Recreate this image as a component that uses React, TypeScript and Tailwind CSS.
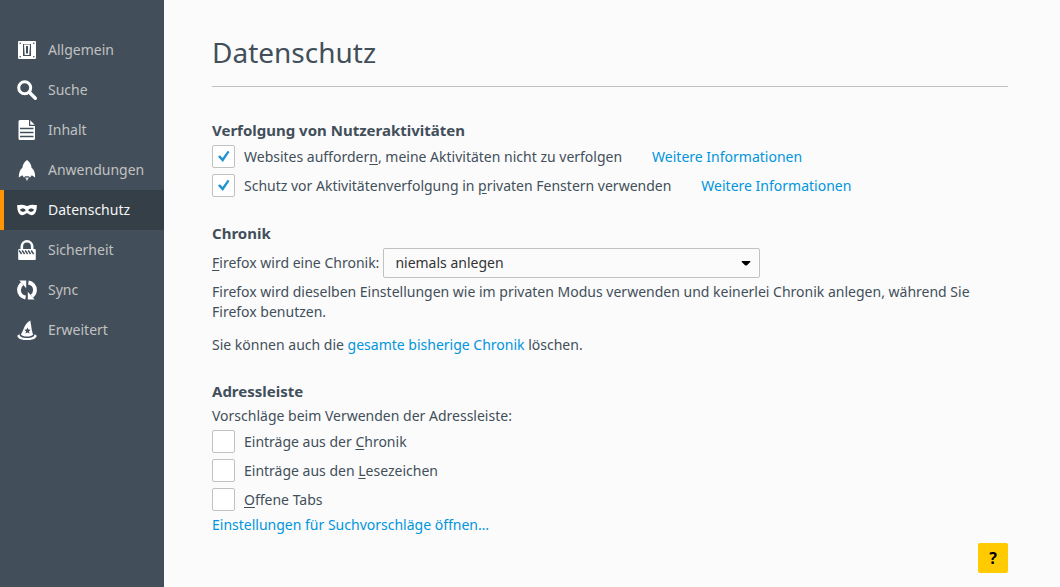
import { ReactNode } from "react";

const icons = {
  general: (
    <>
      <path
        fillRule="evenodd"
        d="M2 1h16a1 1 0 0 1 1 1v16a1 1 0 0 1-1 1H2a1 1 0 0 1-1-1V2a1 1 0 0 1 1-1ZM3.200 2.400a.8.8 0 1 0 0 1.600.8.8 0 0 0 0-1.600Zm13.600 0a.8.8 0 1 0 0 1.600.8.8 0 0 0 0-1.600ZM3.200 16a.8.8 0 1 0 0 1.600.8.8 0 0 0 0-1.600Zm13.600 0a.8.8 0 1 0 0 1.600.8.8 0 0 0 0-1.600ZM6 4v12h8V4Z"
      />
      <path fillRule="evenodd" d="M7 4.500h6l-.7 10.500H7.700ZM9 6v7.500h2V6Z" />
    </>
  ),
  search: (
    <>
      <circle cx="7.7" cy="7.7" r="6" fill="none" stroke="currentColor" strokeWidth="3" />
      <path d="m12.3 12.3 6 6" stroke="currentColor" strokeWidth="3.4" strokeLinecap="round" />
    </>
  ),
  content: (
    <>
      <path d="M3 0h9v6h6v12.500a1.500 1.500 0 0 1-1.500 1.500H3a1.500 1.500 0 0 1-1.500-1.500v-17A1.500 1.500 0 0 1 3 0Z" />
      <path d="M13.200.3 17.700 4.800h-4.500Z" />
      <path d="M3 8.500h13.500M3 12.500h13.500M3 16.500h13.500" className="stroke-[#424f5a]" strokeWidth="1.400" />
    </>
  ),
  applications: (
    <>
      <path d="M10 0c2.600 1.800 4.200 4.300 4.600 7.800 2.300 1.700 3.600 4.800 3.600 9.700l-3.400-2.200-1.800 2.200-1.200-1.300H8.200L7 17.500l-1.800-2.200-3.400 2.200c0-4.900 1.300-8 3.600-9.700C5.800 4.300 7.400 1.800 10 0Z" />
      <path d="M8.100 17.600h3.800L10 21Z" opacity="0.8" />
    </>
  ),
  privacy: (
    <path
      fillRule="evenodd"
      d="M.2 5C2 5.200 3 4.800 5 4.800c2.200 0 3.500 1.200 5 1.200s2.800-1.200 5-1.200c2 0 3 .4 4.800.2.100 5.800-1.500 10.200-5.300 10.200-2.300 0-3-1.900-4.500-1.900s-2.200 1.900-4.500 1.900C1.700 15.200.1 10.800.2 5ZM3 9.800c.8 1.400 1.700 2 3 2s2.300-.6 2.800-1.500C8 9 7.200 8.400 5.900 8.400S3.600 9 3 9.800Zm14 0c-.6-.8-1.600-1.400-2.900-1.400s-2.100.6-2.900 1.900c.5.900 1.500 1.500 2.800 1.500s2.200-.6 3-2Z"
    />
  ),
  security: (
    <>
      <path d="M4.800 10V6.500a5.200 5.200 0 0 1 10.400 0V10" fill="none" stroke="currentColor" strokeWidth="2.600" />
      <path d="M2.200 9h15.600a1 1 0 0 1 1 1v9a1 1 0 0 1-1 1H2.200a1 1 0 0 1-1-1v-9a1 1 0 0 1 1-1Z" />
      <path
        d="m2.200 10.500 2.400 3.500M5.200 10.500l2.400 3.500M8.200 10.500l2.400 3.500M11.200 10.500l2.400 3.500M14.200 10.500l2.400 3.500"
        className="stroke-[#424f5a]"
        strokeWidth="1.400"
      />
    </>
  ),
  sync: (
    <>
      <path d="M8.600 17.500C4.700 16.900 2 13.800 2 10c0-2.600 1.200-4.700 3.200-6.200" fill="none" stroke="currentColor" strokeWidth="3.800" />
      <path d="M2.400.4h6.800v7.800Z" />
      <path d="M11.400 2.500C15.300 3.100 18 6.200 18 10c0 2.600-1.200 4.700-3.200 6.200" fill="none" stroke="currentColor" strokeWidth="3.800" />
      <path d="M17.600 19.600h-6.800v-7.800Z" />
    </>
  ),
  advanced: (
    <>
      <path
        fillRule="evenodd"
        d="M13.600.5c-.4 1.800.3 3.100.5 4.800.4 3.300.9 6.300 2 9.300-1.300 1.500-3.400 2-6.100 2s-4.800-.6-6.100-2.100C6.300 10.900 6.700 7.300 9 4.300 10.200 2.700 11.600 1.200 13.600.5ZM10.500 7.500l-.9 2.100-2.300.2 1.700 1.500-.5 2.300 2-1.200 2 1.200-.5-2.300 1.700-1.500-2.300-.2Z"
      />
      <path d="M2.500 14.200C.8 14.800.2 15.600.5 16.400 1.300 18.800 5 20 10 20s8.700-1.200 9.500-3.600c.3-.8-.3-1.600-2-2.200.3 2.400-2.900 3.700-7.500 3.700s-7.800-1.300-7.500-3.700Z" />
    </>
  ),
};

const categories: { label: string; icon: keyof typeof icons }[] = [
  { label: "Allgemein", icon: "general" },
  { label: "Suche", icon: "search" },
  { label: "Inhalt", icon: "content" },
  { label: "Anwendungen", icon: "applications" },
  { label: "Datenschutz", icon: "privacy" },
  { label: "Sicherheit", icon: "security" },
  { label: "Sync", icon: "sync" },
  { label: "Erweitert", icon: "advanced" },
];

function Key({ children }: { children: ReactNode }) {
  return <span className="underline underline-offset-2">{children}</span>;
}

function Link({ children }: { children: ReactNode }) {
  return (
    <a href="#" className="text-[#0095dd] hover:underline">
      {children}
    </a>
  );
}

function CheckRow({ id, checked, children, link }: { id: string; checked?: boolean; children: ReactNode; link?: string }) {
  return (
    <div className="flex items-center">
      <span className="grid shrink-0">
        <input
          type="checkbox"
          id={id}
          defaultChecked={checked}
          className="peer col-start-1 row-start-1 size-[23px] appearance-none rounded-xs border border-[#c1c1c1] bg-white"
        />
        <svg
          viewBox="0 0 23 23"
          className="pointer-events-none invisible col-start-1 row-start-1 size-[23px] peer-checked:visible"
        >
          <path d="m6 11.800 2-1.600 2.500 2.700 5.200-7.200 1.800 1.300-6.700 9.900Z" className="fill-[#2292d0]" />
        </svg>
      </span>
      <label htmlFor={id} className="ml-[9px]">
        {children}
      </label>
      {link && (
        <span className="ml-[30px]">
          <Link>{link}</Link>
        </span>
      )}
    </div>
  );
}

export default function App() {
  return (
    <div className="flex min-h-screen bg-[#fbfbfb] font-['Noto_Sans',sans-serif] text-sm leading-5 text-[#424f5a]">
      <nav className="w-[164px] shrink-0 bg-[#424f5a] pt-[30px]">
        {categories.map(({ label, icon }) => (
          <a
            key={label}
            href="#"
            className={
              label === "Datenschutz"
                ? "flex h-10 items-center gap-[11px] border-l-4 border-[#ff9500] bg-[#343f48] pl-[13px] text-[#f5f5f5]"
                : "flex h-10 items-center gap-[11px] border-l-4 border-transparent pl-[13px] text-[#c1c1c1]"
            }
          >
            <svg viewBox="0 0 20 20" className="size-5 overflow-visible text-white" fill="currentColor">
              {icons[icon]}
            </svg>
            {label}
          </a>
        ))}
      </nav>

      <main className="flex flex-1 flex-col pt-8 pr-[52px] pb-[14px] pl-12">
        <h1 className="border-b border-[#c1c1c1] pb-[14px] text-[28px] leading-10">Datenschutz</h1>

        <section className="mt-[33px]">
          <h2 className="mb-[5px] text-[15px] leading-5 font-bold">Verfolgung von Nutzeraktivitäten</h2>
          <div className="flex flex-col gap-[6px]">
            <CheckRow id="dnt" checked link="Weitere Informationen">
              Websites aufforder<Key>n</Key>, meine Aktivitäten nicht zu verfolgen
            </CheckRow>
            <CheckRow id="tracking" checked link="Weitere Informationen">
              Schutz vor Aktivitätenverfolgung in <Key>p</Key>rivaten Fenstern verwenden
            </CheckRow>
          </div>
        </section>

        <section className="mt-[26px]">
          <h2 className="mb-[5px] text-[15px] leading-5 font-bold">Chronik</h2>
          <div className="flex items-center gap-1">
            <label htmlFor="history">
              <Key>F</Key>irefox wird eine Chronik:
            </label>
            <div className="grid w-[377px] items-center">
              <select
                id="history"
                className="col-start-1 row-start-1 h-[30px] appearance-none rounded-xs border border-[#c1c1c1] bg-[#fbfbfb] pl-[11px] text-[#333333]"
              >
                <option>niemals anlegen</option>
              </select>
              <svg
                viewBox="0 0 10 5"
                className="pointer-events-none col-start-1 row-start-1 mr-[9px] h-[5px] w-[10px] justify-self-end fill-black"
              >
                <path d="M1 0h8l.5.8L6 4.200q-1 .8-2 0L.5.8Z" />
              </svg>
            </div>
          </div>
          <p className="mt-1">
            Firefox wird dieselben Einstellungen wie im privaten Modus verwenden und keinerlei Chronik anlegen, während
            Sie Firefox benutzen.
          </p>
          <p className="mt-[13px]">
            Sie können auch die <Link>gesamte bisherige Chronik</Link> löschen.
          </p>
        </section>

        <section className="mt-[26px]">
          <h2 className="mb-[5px] text-[15px] leading-5 font-bold">Adressleiste</h2>
          <p className="mb-1">Vorschläge beim Verwenden der Adressleiste:</p>
          <div className="mb-1 flex flex-col gap-[6px]">
            <CheckRow id="suggest-history">
              Einträge aus der <Key>C</Key>hronik
            </CheckRow>
            <CheckRow id="suggest-bookmarks">
              Einträge aus den <Key>L</Key>esezeichen
            </CheckRow>
            <CheckRow id="suggest-tabs">
              <Key>O</Key>ffene Tabs
            </CheckRow>
          </div>
          <Link>Einstellungen für Suchvorschläge öffnen…</Link>
        </section>

        <button
          aria-label="Hilfe"
          className="mt-auto size-[30px] self-end rounded-xs bg-[#ffcb00] text-base font-bold text-black"
        >
          ?
        </button>
      </main>
    </div>
  );
}
